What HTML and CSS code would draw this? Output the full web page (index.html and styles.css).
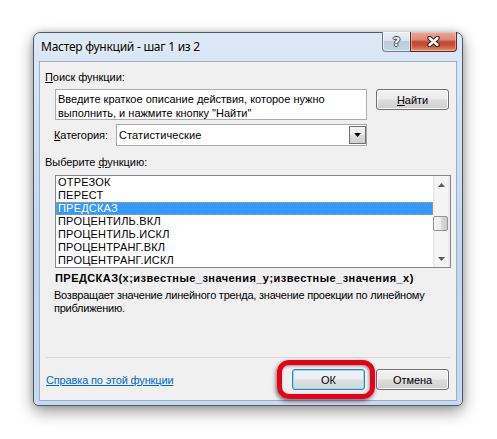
FILE: index.html
```html
<!DOCTYPE html>
<html>
<head>
<meta charset="utf-8">
<title>Мастер функций</title>
<link rel="stylesheet" href="styles.css">
</head>
<body>
<div class="stage">
  <div class="window">
    <div class="titlebar">
      <span class="title">Мастер функций - шаг 1 из 2</span>
      <div class="caption-btns">
        <div class="cbtn help"><span class="qmark">?</span></div>
        <div class="cbtn close">
          <svg width="13" height="11" viewBox="0 0 13 11">
            <path d="M2.5 2 L10.5 9 M10.5 2 L2.5 9" stroke="#3b2320" stroke-width="4.6" stroke-linecap="round" fill="none"/>
            <path d="M2.5 2 L10.5 9 M10.5 2 L2.5 9" stroke="#ffffff" stroke-width="2.4" stroke-linecap="round" fill="none"/>
          </svg>
        </div>
      </div>
    </div>
    <div class="client">
      <div class="label label-search"><u>П</u>оиск функции:</div>
      <div class="search-row">
        <div class="search-box">Введите краткое описание действия, которое нужно<br>выполнить, и нажмите кнопку "Найти"</div>
        <div class="btn btn-find"><u>Н</u>айти</div>
      </div>
      <div class="cat-row">
        <span class="cat-label"><u>К</u>атегория:</span>
        <div class="combo">
          <span class="combo-text">Статистические</span>
          <span class="combo-btn">
            <svg width="7" height="4" viewBox="0 0 7 4"><polygon points="0,0 7,0 3.5,4" fill="#000"/></svg>
          </span>
        </div>
      </div>
      <div class="label label-func">Выберите <u>ф</u>ункцию:</div>
      <div class="listbox">
        <div class="items">
          <div class="item">ОТРЕЗОК</div>
          <div class="item">ПЕРЕСТ</div>
          <div class="item selected">ПРЕДСКАЗ</div>
          <div class="item">ПРОЦЕНТИЛЬ.ВКЛ</div>
          <div class="item">ПРОЦЕНТИЛЬ.ИСКЛ</div>
          <div class="item">ПРОЦЕНТРАНГ.ВКЛ</div>
          <div class="item">ПРОЦЕНТРАНГ.ИСКЛ</div>
        </div>
        <div class="scrollbar">
          <div class="sb-arrow">
            <svg width="7" height="4" viewBox="0 0 7 4"><polygon points="0,4 7,4 3.5,0" fill="#5a5a5a"/></svg>
          </div>
          <div class="sb-track">
            <div class="sb-thumb"></div>
          </div>
          <div class="sb-arrow">
            <svg width="7" height="4" viewBox="0 0 7 4"><polygon points="0,0 7,0 3.5,4" fill="#5a5a5a"/></svg>
          </div>
        </div>
      </div>
      <div class="signature">ПРЕДСКАЗ(x;известные_значения_y;известные_значения_x)</div>
      <div class="desc">Возвращает значение линейного тренда, значение проекции по линейному<br>приближению.</div>
      <div class="separator"></div>
      <div class="bottom-row">
        <a class="help-link" href="#">Справка по этой функции</a>
        <div class="ok-wrap">
          <div class="btn btn-ok">ОК</div>
          <div class="annot"></div>
        </div>
        <div class="btn btn-cancel">Отмена</div>
      </div>
    </div>
  </div>
</div>
</body>
</html>
```

FILE: styles.css
```css
html, body {
  margin: 0;
  padding: 0;
  background: #ffffff;
}

body {
  width: 497px;
  height: 439px;
  overflow: hidden;
}

.stage {
  padding: 32px 0 0 33px;
}

.window {
  width: 430px;
  box-sizing: border-box;
  border: 1px solid #4f5a68;
  border-radius: 7px 7px 5px 5px;
  padding: 0 5px 4px 5px;
  background: linear-gradient(180deg, #dde8f5 0%, #cfdff1 30%, #c3d6ee 60%, #c8daef 100%);
  box-shadow: 0 6px 16px rgba(0, 0, 0, 0.38), 0 0 6px rgba(0, 0, 0, 0.2);
}

.titlebar {
  height: 28px;
  display: flex;
  align-items: flex-start;
}

.title {
  margin-left: 2px;
  line-height: 28px;
  font-family: "Noto Sans", "Open Sans", sans-serif;
  font-size: 12px;
  letter-spacing: -0.25px;
  color: #000;
  text-shadow: 0 0 6px rgba(255, 255, 255, 0.9);
}

.caption-btns {
  margin-left: auto;
  margin-top: -1px;
  display: flex;
}

.cbtn {
  height: 20px;
  box-sizing: border-box;
  display: flex;
  align-items: center;
  justify-content: center;
}

.help {
  width: 28px;
  border: 1px solid #6d7d92;
  border-top: none;
  border-right: none;
  border-radius: 0 0 0 4px;
  background: linear-gradient(180deg, #e9eff6 0%, #dbe4ee 45%, #bccadb 50%, #c6d5e5 100%);
  box-shadow: inset 0 0 0 1px rgba(255, 255, 255, 0.55);
}

.qmark {
  font-family: "DejaVu Sans", sans-serif;
  font-weight: bold;
  font-size: 13px;
  line-height: 13px;
  color: #f4f6f9;
  text-shadow: 1px 0 0 #3c4654, -1px 0 0 #3c4654, 0 1px 0 #3c4654, 0 -1px 0 #3c4654;
}

.close {
  width: 47px;
  border: 1px solid #5c2a24;
  border-top: none;
  border-radius: 0 0 4px 0;
  background: linear-gradient(180deg, #e9aa9c 0%, #dd8a78 40%, #c5452f 52%, #cc553c 75%, #e0957b 100%);
  box-shadow: inset 0 0 0 1px rgba(255, 210, 200, 0.5);
}

.client {
  height: 338px;
  border: 1px solid #9aaec6;
  background: #f0f0f0;
  display: flex;
  flex-direction: column;
  font-family: "Liberation Sans", Arial, sans-serif;
  font-size: 11px;
  line-height: 14px;
  letter-spacing: -0.05px;
  color: #000;
}

.label {
  margin-left: 5px;
}

.label-search {
  margin-top: 8px;
}

.search-row {
  margin-top: 5px;
  margin-left: 15px;
  display: flex;
  align-items: flex-start;
}

.search-box {
  width: 312px;
  height: 31px;
  box-sizing: border-box;
  border: 1px solid #abadb3;
  background: #fff;
  padding: 2px 0 0 2px;
  white-space: nowrap;
  letter-spacing: 0;
}

.btn {
  width: 73px;
  height: 21px;
  box-sizing: border-box;
  border: 1px solid #707070;
  border-radius: 3px;
  background: linear-gradient(180deg, #f2f2f2 0%, #ebebeb 48%, #dddddd 52%, #cfcfcf 100%);
  box-shadow: inset 0 0 0 1px rgba(255, 255, 255, 0.8);
  display: flex;
  align-items: center;
  justify-content: center;
}

.btn-find {
  margin-left: 9px;
}

.cat-row {
  margin-top: 4px;
  margin-left: 14px;
  height: 22px;
  display: flex;
  align-items: center;
}

.cat-label {
  width: 62px;
}

.combo {
  width: 251px;
  height: 22px;
  box-sizing: border-box;
  border: 1px solid #a7a7a7;
  background: #fff;
  display: flex;
  align-items: center;
}

.combo-text {
  padding-left: 2px;
  flex: 1;
  letter-spacing: 0.1px;
}

.combo-btn {
  width: 17px;
  height: 18px;
  box-sizing: border-box;
  border: 1px solid #707070;
  background: linear-gradient(180deg, #f2f2f2 0%, #ebebeb 48%, #dddddd 52%, #cfcfcf 100%);
  display: flex;
  align-items: center;
  justify-content: center;
}

.label-func {
  margin-top: 9px;
}

.listbox {
  margin-top: 6px;
  margin-left: 15px;
  width: 396px;
  height: 93px;
  box-sizing: border-box;
  border: 1px solid #828790;
  background: #fff;
  display: flex;
}

.items {
  flex: 1;
}

.item {
  height: 13px;
  line-height: 13px;
  padding-left: 2px;
  white-space: nowrap;
  letter-spacing: 0.2px;
}

.item.selected {
  background: #3399ff;
  color: #fff;
  outline: 1px dotted #d99a38;
  outline-offset: -1px;
}

.scrollbar {
  width: 17px;
  display: flex;
  flex-direction: column;
  background: linear-gradient(90deg, #e6e6e6 0%, #f4f4f4 15%, #f4f4f4 85%, #e6e6e6 100%);
}

.sb-arrow {
  height: 17px;
  display: flex;
  align-items: center;
  justify-content: center;
}

.sb-track {
  flex: 1;
}

.sb-thumb {
  margin-top: 23px;
  width: 15px;
  height: 15px;
  box-sizing: border-box;
  border: 1px solid #959595;
  border-radius: 2px;
  background: linear-gradient(90deg, #f5f5f5 0%, #ececec 50%, #dadada 55%, #c9c9c9 100%);
}

.signature {
  margin-top: 3px;
  margin-left: 15px;
  font-weight: bold;
  white-space: nowrap;
  letter-spacing: 0.45px;
}

.desc {
  margin-top: 4px;
  margin-left: 14px;
  line-height: 13px;
  white-space: nowrap;
  letter-spacing: -0.23px;
}

.separator {
  margin-top: 42px;
  margin-left: 6px;
  width: 405px;
  height: 1px;
  background: #d9d9d9;
}

.bottom-row {
  margin-top: 11px;
  height: 21px;
  padding-left: 6px;
  padding-right: 7px;
  display: flex;
  align-items: center;
}

.help-link {
  color: #0066cc;
  text-decoration: underline;
  margin-right: auto;
  letter-spacing: -0.15px;
}

.ok-wrap {
  position: relative;
}

.btn-ok {
  border-color: #3c7fb1;
  box-shadow: inset 0 0 0 1px #8fdcf5;
  background: linear-gradient(180deg, #f2f4f6 0%, #eaedf0 48%, #dde1e5 52%, #d2d7dc 100%);
}

.btn-cancel {
  margin-left: 11px;
}

.annot {
  position: absolute;
  left: -15px;
  top: -9px;
  width: 98px;
  height: 39px;
  box-sizing: border-box;
  border: 5px solid #e5001b;
  border-radius: 12px;
  box-shadow: -1px 2px 4px rgba(0, 0, 0, 0.55), inset -1px 1px 3px rgba(0, 0, 0, 0.4);
}
```
